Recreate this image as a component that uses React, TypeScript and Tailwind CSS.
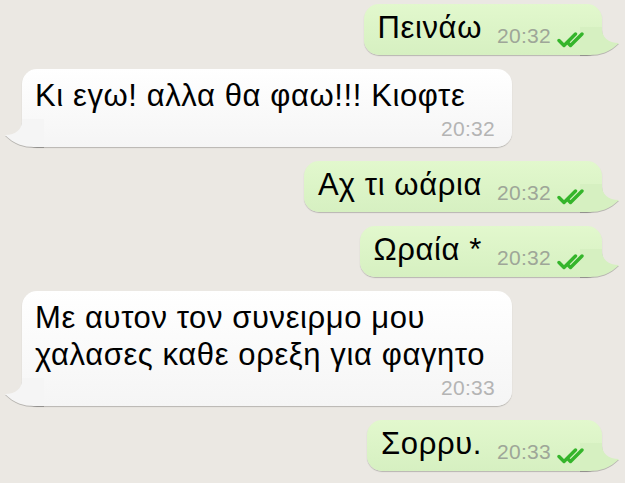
import React from "react"

type Msg = {
  out: boolean
  text: React.ReactNode
  time: string
}

const messages: Msg[] = [
  { out: true, text: "Πεινάω", time: "20:32" },
  { out: false, text: "Κι εγω! αλλα θα φαω!!! Κιοφτε", time: "20:32" },
  { out: true, text: "Αχ τι ωάρια", time: "20:32" },
  { out: true, text: "Ωραία *", time: "20:32" },
  {
    out: false,
    text: (
      <>
        Με αυτον τον συνειρμο μου
        <br />
        χαλασες καθε ορεξη για φαγητο
      </>
    ),
    time: "20:33",
  },
  { out: true, text: "Σορρυ.", time: "20:33" },
]

function Ticks() {
  return (
    <svg width="29" height="16" viewBox="0 0 29 16" className="ml-[6px]">
      <path
        d="M2 8.5 L7 13.5 L18.5 2"
        fill="none"
        stroke="#35b52b"
        strokeWidth="3.4"
        strokeLinecap="round"
        strokeLinejoin="round"
      />
      <path
        d="M11.5 11.5 L13.5 13.5 L25 2"
        fill="none"
        stroke="#35b52b"
        strokeWidth="3.4"
        strokeLinecap="round"
        strokeLinejoin="round"
      />
    </svg>
  )
}

function Tail({ out }: { out: boolean }) {
  return (
    <svg
      width="40"
      height="28"
      viewBox="0 0 40 28"
      className={
        out
          ? "absolute bottom-0 right-[-18px] -scale-x-100 drop-shadow-[0_1px_0.5px_rgba(0,0,0,0.22)]"
          : "absolute bottom-0 left-[-18px] drop-shadow-[0_1px_0.5px_rgba(0,0,0,0.22)]"
      }
    >
      <path
        d="M18 0 L40 0 L40 28 L30 28 C20 28 10 25 1 16 C12 16 18 10 18 2 Z"
        fill={out ? "#d6f0c1" : "#f5f5f5"}
      />
    </svg>
  )
}

function Bubble({ msg }: { msg: Msg }) {
  if (msg.out) {
    return (
      <div className="relative self-end mr-[23px] flex h-[51px] items-end rounded-[15px] bg-gradient-to-b from-[#e2f8cd] to-[#d6f0c1] pl-[14px] pr-[16px] pb-[7px] shadow-[0_1px_1px_rgba(0,0,0,0.22)]">
        <Tail out />
        <span className="relative mb-[3px] text-[31px] leading-[34px] tracking-[0.6px] text-black">
          {msg.text}
        </span>
        <span className="relative ml-[15px] text-[21px] leading-[24px] tracking-[0.3px] text-[#9ea698]">
          {msg.time}
        </span>
        <span className="relative flex">
          <Ticks />
        </span>
      </div>
    )
  }
  return (
    <div className="relative ml-[22px] flex w-[490px] flex-col rounded-[15px] bg-gradient-to-b from-white to-[#f5f5f5] pl-[13px] pr-[17px] pt-[8px] pb-[6px] shadow-[0_1px_1px_rgba(0,0,0,0.22)]">
      <Tail out={false} />
      <span className="relative text-[31px] leading-[37px] tracking-[0.6px] text-black">
        {msg.text}
      </span>
      <span className="relative mt-[3px] self-end text-[21px] leading-[24px] tracking-[0.3px] text-[#b4b4b4]">
        {msg.time}
      </span>
    </div>
  )
}

export default function App() {
  return (
    <div className="flex h-[483px] w-[625px] flex-col gap-[14px] overflow-hidden bg-[#ebe8e3] pt-[4px] font-['Liberation_Sans',Arial,sans-serif]">
      {messages.map((m, i) => (
        <Bubble key={i} msg={m} />
      ))}
    </div>
  )
}
